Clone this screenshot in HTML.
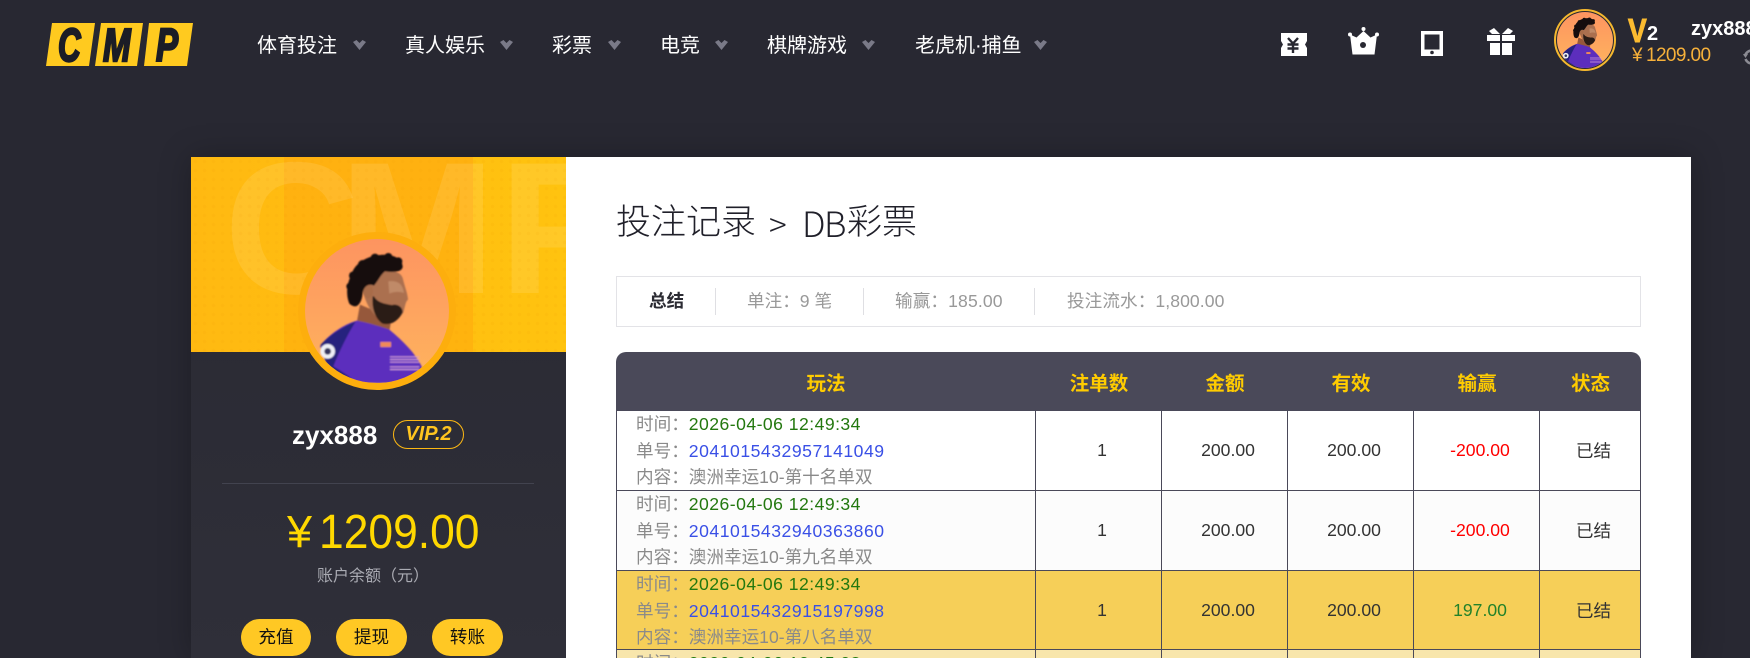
<!DOCTYPE html>
<html lang="zh-CN">
<head>
<meta charset="utf-8">
<title>投注记录</title>
<style>
*{box-sizing:border-box;margin:0;padding:0}
html,body{width:1750px;height:658px;overflow:hidden;background:#282832}
body{position:relative;font-family:"Liberation Sans","Noto Sans CJK SC",sans-serif;color:#333}
.t{position:absolute;white-space:nowrap}
.nav{position:absolute;top:31px;height:30px;line-height:30px;font-size:20px;color:#fff;white-space:nowrap}
.chev{position:absolute;top:40px;width:13px;height:10px}
#card{position:absolute;left:191px;top:157px;width:1500px;height:501px;background:#fff;box-shadow:0 0 30px rgba(0,0,0,.25)}
#left{position:absolute;left:191px;top:157px;width:375px;height:501px;background:linear-gradient(180deg,#292932,#2f2f39);overflow:hidden}
#banner{position:absolute;left:0;top:0;width:375px;height:195px;overflow:hidden;background:linear-gradient(90deg,#ffb911,#ffc30f)}
#banner .stripe{position:absolute;left:93px;top:0;width:189px;height:195px;background:linear-gradient(180deg,#ffb110,#ffb30e)}
#banner .dots{position:absolute;inset:0;background-image:radial-gradient(rgba(230,140,0,.07) 1.6px,transparent 2px);background-size:9px 9px}
#banner b{position:absolute;top:-34px;font-size:188px;line-height:210px;font-weight:700;color:rgba(255,255,255,.1)}
.btn{position:absolute;top:462px;height:37px;border-radius:19px;background:#ffc824;color:#111;font-size:17.6px;line-height:37px;text-align:center}
#sum{position:absolute;left:616px;top:276px;width:1025px;height:51px;border:1px solid #e3e3e7;background:#fff}
#sum i{position:absolute;top:11px;width:1px;height:27px;background:#dfdfe3}
#sum span{position:absolute;top:0;line-height:49px;font-size:17.6px;color:#999;white-space:nowrap}
#tw{position:absolute;left:616px;top:352px;width:1025px;height:306px;overflow:hidden}
table{width:1025px;border-collapse:separate;border-spacing:0;table-layout:fixed}
th{height:59px;background:#4a4959;color:#ffcc00;font-size:19.5px;font-weight:700;text-align:center}
th:first-child{border-top-left-radius:10px}
th:last-child{border-top-right-radius:10px}
td{border-right:1px solid #4a4959;border-bottom:1px solid #4a4959;font-size:17.6px;text-align:center;padding-left:7px;color:#333}
td:first-child{border-left:1px solid #4a4959;text-align:left;padding-left:19px;vertical-align:top;color:#8a8a8a;white-space:nowrap}
.w{height:78px;line-height:26.67px;overflow:visible}
.d{color:#23780f;letter-spacing:.46px}
.n{color:#3a50e6;letter-spacing:.52px}
.r1 td{height:80px;background:#fff}
.r2 td{height:80px;background:#fcfcfc}
.r3 td{height:79px;background:#f6cf58}
.r4 td{height:8px;background:#f8e6ac;border-bottom:0}
.r4 .w{height:8px;overflow:hidden}
.red{color:#ff0000!important}
.grn{color:#22822a!important}
</style>
</head>
<body>
<svg width="0" height="0" style="position:absolute">
<defs>
<linearGradient id="ph" x1="0" y1="0" x2="0" y2="1"><stop offset="0" stop-color="#fd9460"/><stop offset="1" stop-color="#ffb45e"/></linearGradient>
<clipPath id="cc"><circle cx="591" cy="484" r="216"/></clipPath>
<filter id="soft" x="-5%" y="-5%" width="110%" height="110%"><feGaussianBlur stdDeviation="2"/></filter>
<symbol id="man" viewBox="375 268 432 432">
<g clip-path="url(#cc)">
<rect x="375" y="268" width="432" height="432" fill="url(#ph)"/>
<g filter="url(#soft)">
<path d="M540 465L530 520L628 545L635 505Z" fill="#96583a"/>
<path d="M590 372C620 355 660 362 668 385C674 410 684 435 684 450C676 456 676 470 670 488C655 512 630 524 612 518C585 505 560 470 550 430Z" fill="#ab7050"/>
<path d="M625 395C650 392 668 400 672 430C660 425 640 425 628 432Z" fill="#c08a68"/>
<ellipse cx="564" cy="425" rx="15" ry="21" fill="#a86c4a"/>
<path d="M582 440C592 458 612 462 636 466C650 462 668 470 668 488C655 515 630 528 608 522C588 510 574 478 578 440Z" fill="#2a1a14"/>
<path d="M508 462C495 430 503 395 515 375C520 345 560 318 600 316C635 312 668 325 668 352C665 368 640 368 615 365C602 375 596 392 582 408C565 400 552 410 548 430C545 462 530 482 508 462Z" fill="#15100e"/>
<g fill="#15100e">
<circle cx="518" cy="440" r="13"/><circle cx="510" cy="410" r="11"/><circle cx="520" cy="378" r="13"/>
<circle cx="548" cy="345" r="14"/><circle cx="585" cy="325" r="13"/><circle cx="625" cy="322" r="12"/><circle cx="655" cy="335" r="12"/>
</g>
<path d="M420 590C445 555 490 525 530 513C565 520 600 530 628 540C670 575 705 610 725 650L725 700L500 700C470 680 440 640 420 590Z" fill="#5c2dbd"/>
<path d="M422 585C450 555 490 530 527 516C505 550 480 600 460 650C485 665 510 680 530 700L480 700C450 670 430 630 422 585Z" fill="#27207e"/>
<circle cx="443" cy="605" r="22" fill="#eef0f6"/><circle cx="443" cy="605" r="10" fill="#34345e"/>
<rect x="601" y="577" width="32" height="15" fill="#ef8a58"/>
<rect x="630" y="620" width="88" height="3" fill="#d9a0d8"/><rect x="630" y="628" width="88" height="3" fill="#d9a0d8"/><rect x="630" y="636" width="88" height="3" fill="#d9a0d8"/>
<rect x="630" y="650" width="88" height="3" fill="#d9a0d8"/><rect x="630" y="658" width="88" height="3" fill="#d9a0d8"/>
</g>
</g>
</symbol>
</defs>
</svg>

<!-- logo -->
<svg style="position:absolute;left:46px;top:23px" width="148" height="44" viewBox="0 0 148 44">
<path d="M6 0H49L43 43H0Z" fill="#ffca1f"/>
<path d="M55 0H97L91 43H49Z" fill="#ffca1f"/>
<path d="M103 0H147L141 43H98Z" fill="#ffca1f"/>
<g font-family="'Liberation Sans',sans-serif" font-weight="700" font-style="italic" font-size="46" fill="#1b1d26" stroke="#1b1d26" stroke-width="2.4">
<text transform="translate(12 38) scale(.68 1)">C</text>
<text transform="translate(57 38) scale(.72 1)">M</text>
<text transform="translate(110 38) scale(.72 1)">P</text>
</g>
</svg>

<!-- nav -->
<div class="nav" style="left:257px">体育投注</div>
<div class="nav" style="left:405px">真人娱乐</div>
<div class="nav" style="left:552px">彩票</div>
<div class="nav" style="left:660px">电竞</div>
<div class="nav" style="left:767px">棋牌游戏</div>
<div class="nav" style="left:915px">老虎机·捕鱼</div>
<svg class="chev" style="left:353px" viewBox="0 0 13 10"><path d="M0 2L3.500 0L6.500 3L9.500 0L13 2L6.500 10Z" fill="#7a7a88"/></svg>
<svg class="chev" style="left:500px" viewBox="0 0 13 10"><path d="M0 2L3.500 0L6.500 3L9.500 0L13 2L6.500 10Z" fill="#7a7a88"/></svg>
<svg class="chev" style="left:608px" viewBox="0 0 13 10"><path d="M0 2L3.500 0L6.500 3L9.500 0L13 2L6.500 10Z" fill="#7a7a88"/></svg>
<svg class="chev" style="left:715px" viewBox="0 0 13 10"><path d="M0 2L3.500 0L6.500 3L9.500 0L13 2L6.500 10Z" fill="#7a7a88"/></svg>
<svg class="chev" style="left:862px" viewBox="0 0 13 10"><path d="M0 2L3.500 0L6.500 3L9.500 0L13 2L6.500 10Z" fill="#7a7a88"/></svg>
<svg class="chev" style="left:1034px" viewBox="0 0 13 10"><path d="M0 2L3.500 0L6.500 3L9.500 0L13 2L6.500 10Z" fill="#7a7a88"/></svg>

<!-- right icons -->
<svg style="position:absolute;left:1281px;top:33px" width="26" height="23" viewBox="0 0 26 23">
<path d="M0 0H26V8L24 11.500L26 15V23H0V15L2 11.500L0 8Z" fill="#fff"/>
<path d="M7 5L12 10.500L17 5M6.500 11.500H17.500M6.500 15.500H17.500M12 10.500V20" fill="none" stroke="#282832" stroke-width="2.400"/>
</svg>
<svg style="position:absolute;left:1348px;top:27px" width="31" height="28" viewBox="0 0 31 28">
<circle cx="15.500" cy="2" r="2" fill="#fff"/><circle cx="2" cy="7.500" r="2" fill="#fff"/><circle cx="29" cy="7.500" r="2" fill="#fff"/>
<path d="M2 7.500L8.500 10.500L15.500 4L22.500 10.500L29 7.500L26.500 27.500H4.500Z" fill="#fff"/>
<circle cx="15" cy="18" r="3" fill="#282832"/>
</svg>
<svg style="position:absolute;left:1421px;top:31px" width="22" height="25" viewBox="0 0 22 25">
<path d="M0 0H22V25H0Z" fill="#fff"/><path d="M3.500 3.500H18.500V18.500H3.500Z" fill="#282832"/><circle cx="11" cy="21.500" r="1.800" fill="#282832"/>
</svg>
<svg style="position:absolute;left:1487px;top:28px" width="28" height="27" viewBox="0 0 28 27">
<path d="M0 7H13V13H0ZM15 7H28V13H15ZM3 15H13V27H3ZM15 15H25V27H15Z" fill="#fff"/>
<path d="M2 3L7 0L13 6H5ZM26 3L21 0L15 6H23Z" fill="#fff"/>
</svg>

<!-- small avatar -->
<div style="position:absolute;left:1554px;top:9px;width:62px;height:62px;border-radius:50%;border:2px solid #f5b82e;overflow:hidden;background:#282832;padding:1px">
<svg width="56" height="56" style="display:block"><use href="#man" width="56" height="56"/></svg>
</div>
<div class="t" style="left:1628px;top:14px;font-size:33px;line-height:33px;font-weight:700;color:#fbbb30;-webkit-text-stroke:1px #fbbb30;transform:scaleX(.85);transform-origin:0 0">V</div>
<div class="t" style="left:1647px;top:24px;font-size:20px;line-height:20px;font-weight:700;color:#fff">2</div>
<div class="t" style="left:1691px;top:17px;font-size:20px;line-height:24px;font-weight:700;color:#fff">zyx888</div>
<div class="t" style="left:1632px;top:45px;font-size:19px;line-height:22px;color:#f7b13a">¥</div>
<div class="t" style="left:1646px;top:45px;font-size:19px;line-height:22px;color:#f7b13a;letter-spacing:-.6px">1209.00</div>
<svg style="position:absolute;left:1743px;top:48px" width="7" height="18" viewBox="0 0 7 18"><path d="M9 2.500A7 7 0 0 0 2 8M9 15.500A7 7 0 0 1 2.500 11" fill="none" stroke="#8b8b93" stroke-width="2.600"/><path d="M0 6L5 6L2.500 10Z" fill="#8b8b93"/></svg>

<!-- card -->
<div id="card"></div>
<div id="left">
  <div id="banner">
    <div class="stripe"></div>
    <b style="left:33px">C</b>
    <b style="left:148px">M</b>
    <b style="left:308px">P</b>
    <div class="dots"></div>
  </div>
  <div style="position:absolute;left:107px;top:75px;width:158px;height:158px;border-radius:50%;background:#fdae0d"></div>
  <svg style="position:absolute;left:114px;top:82px" width="144" height="144"><use href="#man" width="144" height="144"/></svg>
  <div class="t" style="left:101px;top:261px;font-size:26px;line-height:34px;font-weight:700;color:#fff">zyx888</div>
  <div class="t" style="left:202px;top:263px;width:71px;height:29px;border:1.500px solid #fdb813;border-radius:15px;text-align:center;font-size:20px;line-height:26px;font-weight:700;font-style:italic;color:#ffc41f">VIP.2</div>
  <div style="position:absolute;left:31px;top:326px;width:312px;height:1px;background:#42434f"></div>
  <div class="t" style="left:96px;top:349px;font-size:45px;line-height:54px;color:#ffd800;transform:translateY(-1px)">¥</div>
  <div class="t" style="left:128px;top:349px;font-size:48px;line-height:54px;color:#ffd800;transform:scaleX(.925);transform-origin:0 0">1209.00</div>
  <div class="t" style="left:126px;top:407px;font-size:16px;line-height:26px;color:#aaabb3">账户余额（元）</div>
  <div class="btn" style="left:50px;width:70px">充值</div>
  <div class="btn" style="left:145px;width:71px">提现</div>
  <div class="btn" style="left:241px;width:71px">转账</div>
</div>

<div class="t" style="left:616px;top:198px;font-size:35px;line-height:50px;color:#20202a;font-weight:300">投注记录</div>
<div class="t" style="left:769px;top:198px;font-size:33px;line-height:50px;color:#20202a;font-family:'Noto Sans CJK SC',sans-serif;font-weight:300">&gt;</div>
<div class="t" style="left:802px;top:198px;font-size:35px;line-height:50px;color:#20202a;font-family:'Noto Sans CJK SC',sans-serif;font-weight:300;letter-spacing:-1.500px">DB</div>
<div class="t" style="left:847px;top:198px;font-size:35px;line-height:50px;color:#20202a;font-weight:300">彩票</div>

<div id="sum">
  <span style="left:32px;color:#2b2b33;font-weight:700">总结</span>
  <i style="left:98px"></i>
  <span style="left:130px">单注：9 笔</span>
  <i style="left:246px"></i>
  <span style="left:278px;letter-spacing:.12px">输赢：185.00</span>
  <i style="left:417px"></i>
  <span style="left:450px;letter-spacing:.08px">投注流水：1,800.00</span>
</div>

<div id="tw">
<table>
<colgroup><col style="width:420px"><col style="width:126px"><col style="width:126px"><col style="width:126px"><col style="width:126px"><col style="width:101px"></colgroup>
<thead><tr><th>玩法</th><th>注单数</th><th>金额</th><th>有效</th><th>输赢</th><th>状态</th></tr></thead>
<tbody>
<tr class="r1"><td><div class="w">时间：<span class="d">2026-04-06 12:49:34</span><br>单号：<span class="n">2041015432957141049</span><br>内容：澳洲幸运10-第十名单双</div></td><td>1</td><td>200.00</td><td>200.00</td><td class="red">-200.00</td><td>已结</td></tr>
<tr class="r2"><td><div class="w">时间：<span class="d">2026-04-06 12:49:34</span><br>单号：<span class="n">2041015432940363860</span><br>内容：澳洲幸运10-第九名单双</div></td><td>1</td><td>200.00</td><td>200.00</td><td class="red">-200.00</td><td>已结</td></tr>
<tr class="r3"><td><div class="w">时间：<span class="d">2026-04-06 12:49:34</span><br>单号：<span class="n">2041015432915197998</span><br>内容：澳洲幸运10-第八名单双</div></td><td>1</td><td>200.00</td><td>200.00</td><td class="grn">197.00</td><td>已结</td></tr>
<tr class="r4"><td><div class="w">时间：<span class="d">2026-04-06 12:45:03</span></div></td><td></td><td></td><td></td><td></td><td></td></tr>
</tbody>
</table>
</div>
</body>
</html>
